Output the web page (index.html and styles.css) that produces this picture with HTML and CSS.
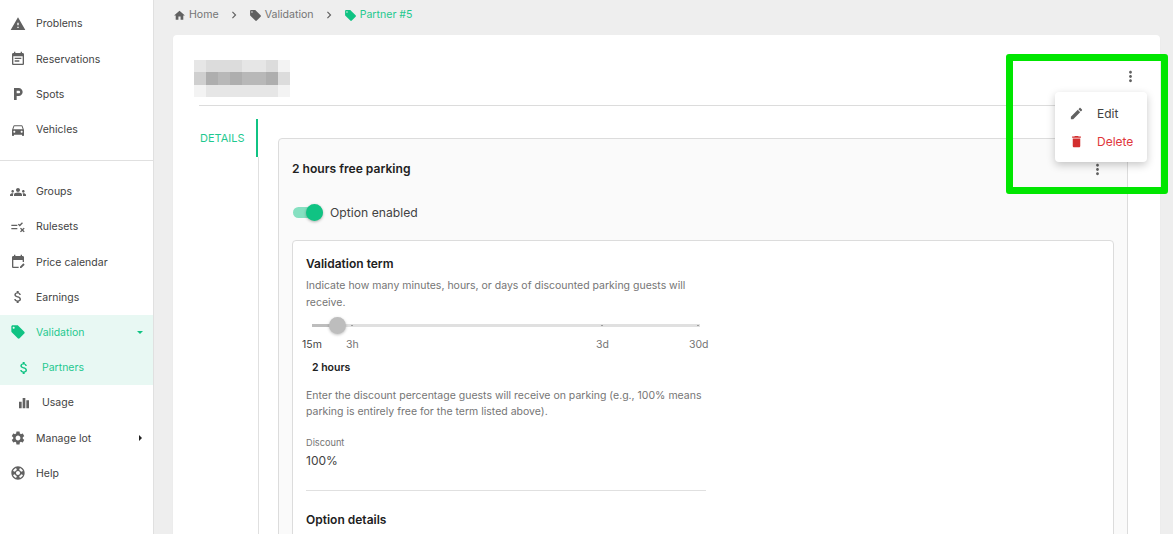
FILE: index.html
```html
<!DOCTYPE html>
<html lang="en">
<head>
<meta charset="utf-8">
<title>Partner #5</title>
<link rel="stylesheet" href="styles.css">
</head>
<body>
<div class="app">
  <aside class="sidebar">
    <nav class="nav-group">
      <a class="nav-item"><svg class="nav-icon" viewBox="0 0 24 24"><path d="M1 21h22L12 2 1 21zm12-3h-2v-2h2v2zm0-4h-2v-4h2v4z"/></svg><span>Problems</span></a>
      <a class="nav-item"><svg class="nav-icon" viewBox="0 0 24 24"><path d="M19 3h-1V1h-2v2H8V1H6v2H5c-1.1 0-2 .9-2 2v14c0 1.1.9 2 2 2h14c1.1 0 2-.9 2-2V5c0-1.1-.9-2-2-2zm0 16H5V8h14v11zM7 10h10v2H7zm0 4h7v2H7z"/></svg><span>Reservations</span></a>
      <a class="nav-item"><svg class="nav-icon" viewBox="0 0 24 24"><path d="M13 3H6v18h4v-6h3c3.31 0 6-2.69 6-6s-2.69-6-6-6zm.2 8H10V7h3.2c1.1 0 2 .9 2 2s-.9 2-2 2z"/></svg><span>Spots</span></a>
      <a class="nav-item"><svg class="nav-icon" viewBox="0 0 24 24"><path d="M18.92 6.01C18.72 5.42 18.16 5 17.5 5h-11c-.66 0-1.21.42-1.42 1.01L3 12v8c0 .55.45 1 1 1h1c.55 0 1-.45 1-1v-1h12v1c0 .55.45 1 1 1h1c.55 0 1-.45 1-1v-8l-2.08-5.99zM6.5 16c-.83 0-1.5-.67-1.5-1.5S5.67 13 6.5 13s1.5.67 1.5 1.5S7.33 16 6.5 16zm11 0c-.83 0-1.5-.67-1.5-1.5s.67-1.5 1.5-1.5 1.5.67 1.5 1.5-.67 1.5-1.5 1.5zM5 11l1.5-4.500h11L19 11H5z"/></svg><span>Vehicles</span></a>
    </nav>
    <hr class="nav-divider">
    <nav class="nav-group">
      <a class="nav-item"><svg class="nav-icon" viewBox="0 0 24 24"><path d="M4 13c1.1 0 2-.9 2-2s-.9-2-2-2-2 .9-2 2 .9 2 2 2zm1.13 1.1C4.76 14.04 4.39 14 4 14c-.99 0-1.93.21-2.78.58C.48 14.9 0 15.62 0 16.43V18h4.5v-1.61c0-.83.23-1.61.63-2.29zM20 13c1.1 0 2-.9 2-2s-.9-2-2-2-2 .9-2 2 .9 2 2 2zm4 3.43c0-.81-.48-1.53-1.22-1.85C21.93 14.21 20.99 14 20 14c-.39 0-.76.04-1.13.1.4.68.63 1.46.63 2.29V18H24v-1.57zM16.24 13.65c-1.17-.52-2.61-.9-4.24-.9s-3.07.39-4.24.9C6.68 14.13 6 15.21 6 16.39V18h12v-1.61c0-1.18-.68-2.26-1.76-2.74zM12 12c1.66 0 3-1.34 3-3s-1.34-3-3-3-3 1.34-3 3 1.34 3 3 3z"/></svg><span>Groups</span></a>
      <a class="nav-item"><svg class="nav-icon" viewBox="0 0 24 24"><path d="M2 8.500h9v2H2zm0 5h9v2H2zm12.600-5.100L18 5l1.400 1.400-4.800 4.800-2.800-2.800 1.400-1.400zm7.400 6L20.600 13l-2.100 2.100-2.100-2.100-1.400 1.400 2.100 2.100-2.100 2.100 1.400 1.400 2.100-2.100 2.100 2.100 1.400-1.400-2.100-2.100z"/></svg><span>Rulesets</span></a>
      <a class="nav-item"><svg class="nav-icon" viewBox="0 0 24 24"><path d="M19 3h-1V1h-2v2H8V1H6v2H5c-1.100 0-2 .9-2 2v14c0 1.100.9 2 2 2h8v-2H5V9h14v3h2V5c0-1.100-.9-2-2-2zM15 21h2l5-5-2-2-5 5z"/></svg><span>Price calendar</span></a>
      <a class="nav-item"><svg class="nav-icon" viewBox="0 0 24 24"><path d="M11.800 10.900c-2.270-.59-3-1.200-3-2.150 0-1.090 1.010-1.850 2.700-1.850 1.780 0 2.440.85 2.500 2.100h2.210c-.07-1.720-1.120-3.300-3.210-3.810V3h-3v2.160c-1.940.42-3.500 1.680-3.500 3.610 0 2.310 1.910 3.460 4.700 4.130 2.500.6 3 1.480 3 2.410 0 .69-.49 1.790-2.700 1.790-2.060 0-2.870-.92-2.980-2.100h-2.200c.12 2.190 1.760 3.420 3.680 3.830V21h3v-2.150c1.950-.37 3.500-1.500 3.500-3.550 0-2.840-2.430-3.810-4.700-4.400z"/></svg><span>Earnings</span></a>
      <div class="nav-active-block">
        <a class="nav-item nav-item-active"><svg class="nav-icon" viewBox="0 0 24 24"><path d="M21.410 11.580l-9-9C12.050 2.220 11.550 2 11 2H4c-1.100 0-2 .9-2 2v7c0 .55.22 1.050.59 1.420l9 9c.36.36.86.58 1.410.58s1.050-.22 1.410-.59l7-7c.37-.36.59-.86.59-1.410s-.23-1.060-.59-1.420zM5.500 7C4.670 7 4 6.330 4 5.500S4.670 4 5.500 4 7 4.670 7 5.500 6.330 7 5.500 7z"/></svg><span>Validation</span><i class="caret caret-down"></i></a>
        <a class="nav-item nav-sub nav-item-active"><svg class="nav-icon" viewBox="0 0 24 24"><path d="M11.800 10.900c-2.270-.59-3-1.200-3-2.150 0-1.090 1.010-1.850 2.700-1.850 1.780 0 2.440.85 2.500 2.100h2.210c-.07-1.720-1.120-3.300-3.210-3.810V3h-3v2.160c-1.940.42-3.500 1.680-3.500 3.610 0 2.310 1.910 3.460 4.700 4.130 2.500.6 3 1.480 3 2.410 0 .69-.49 1.790-2.700 1.790-2.060 0-2.870-.92-2.980-2.100h-2.200c.12 2.190 1.760 3.420 3.680 3.830V21h3v-2.150c1.950-.37 3.500-1.500 3.500-3.550 0-2.840-2.430-3.810-4.700-4.400z"/></svg><span>Partners</span></a>
      </div>
      <a class="nav-item nav-sub"><svg class="nav-icon" viewBox="0 0 24 24"><path d="M4.500 10h4v10h-4zM10 4.500h4V20h-4zM15.500 8h4v12h-4z"/></svg><span>Usage</span></a>
      <a class="nav-item"><svg class="nav-icon" viewBox="0 0 24 24"><path d="M19.140 12.940c.04-.3.060-.61.060-.94 0-.32-.02-.64-.07-.94l2.030-1.580c.18-.14.230-.41.120-.61l-1.920-3.320c-.12-.22-.37-.29-.59-.22l-2.390.96c-.5-.38-1.030-.7-1.620-.94l-.36-2.540c-.04-.24-.24-.41-.48-.41h-3.840c-.24 0-.43.17-.47.41l-.36 2.540c-.59.24-1.130.57-1.620.94l-2.390-.96c-.22-.08-.47 0-.59.22L2.740 8.870c-.12.210-.08.47.12.610l2.030 1.580c-.05.3-.09.630-.09.940s.02.640.07.940l-2.030 1.580c-.18.140-.23.410-.12.610l1.920 3.320c.12.220.37.290.59.220l2.390-.96c.5.380 1.030.7 1.620.94l.36 2.540c.05.240.24.410.48.410h3.840c.24 0 .44-.17.47-.41l.36-2.540c.59-.24 1.130-.56 1.620-.94l2.390.96c.22.080.47 0 .59-.22l1.920-3.320c.12-.22.07-.47-.12-.61l-2.010-1.580zM12 15.600c-1.980 0-3.600-1.620-3.600-3.600s1.620-3.600 3.600-3.600 3.600 1.620 3.600 3.600-1.620 3.600-3.600 3.600z"/></svg><span>Manage lot</span><i class="caret caret-right"></i></a>
      <a class="nav-item"><svg class="nav-icon" viewBox="0 0 24 24"><path d="M12 2C6.480 2 2 6.480 2 12s4.480 10 10 10 10-4.480 10-10S17.520 2 12 2zm7.460 7.120l-2.780 1.150c-.51-1.360-1.580-2.440-2.950-2.940l1.150-2.780c2.100.8 3.770 2.470 4.580 4.570zM12 15c-1.660 0-3-1.340-3-3s1.340-3 3-3 3 1.340 3 3-1.340 3-3 3zM9.130 4.540l1.170 2.780c-1.380.5-2.470 1.590-2.980 2.970L4.540 9.130c.81-2.110 2.480-3.780 4.590-4.590zM4.540 14.870l2.780-1.150c.51 1.380 1.590 2.460 2.970 2.960l-1.170 2.780c-2.100-.81-3.770-2.480-4.580-4.590zm10.340 4.590l-1.150-2.780c1.370-.51 2.450-1.590 2.950-2.970l2.780 1.170c-.81 2.100-2.480 3.770-4.580 4.580z"/></svg><span>Help</span></a>
    </nav>
  </aside>

  <main class="main">
    <div class="crumbs">
      <span class="crumb"><svg class="crumb-icon" viewBox="0 0 24 24"><path d="M10 20v-6h4v6h5v-8h3L12 3 2 12h3v8z"/></svg>Home</span>
      <svg class="crumb-sep" viewBox="0 0 24 24"><path d="M8.590 16.590 13.170 12 8.590 7.410 10 6l6 6-6 6z"/></svg>
      <span class="crumb"><svg class="crumb-icon" viewBox="0 0 24 24"><path d="M21.410 11.580l-9-9C12.050 2.220 11.550 2 11 2H4c-1.100 0-2 .9-2 2v7c0 .55.22 1.050.59 1.420l9 9c.36.36.86.58 1.410.58s1.050-.22 1.410-.59l7-7c.37-.36.59-.86.59-1.410s-.23-1.060-.59-1.420zM5.500 7C4.670 7 4 6.330 4 5.500S4.670 4 5.500 4 7 4.670 7 5.500 6.330 7 5.500 7z"/></svg>Validation</span>
      <svg class="crumb-sep" viewBox="0 0 24 24"><path d="M8.590 16.590 13.170 12 8.590 7.410 10 6l6 6-6 6z"/></svg>
      <span class="crumb crumb-current"><svg class="crumb-icon" viewBox="0 0 24 24"><path d="M21.410 11.580l-9-9C12.050 2.220 11.550 2 11 2H4c-1.100 0-2 .9-2 2v7c0 .55.22 1.050.59 1.420l9 9c.36.36.86.58 1.410.58s1.050-.22 1.410-.59l7-7c.37-.36.59-.86.59-1.410s-.23-1.060-.59-1.420zM5.500 7C4.670 7 4 6.330 4 5.500S4.670 4 5.500 4 7 4.670 7 5.500 6.330 7 5.500 7z"/></svg>Partner #5</span>
    </div>

    <section class="card">
      <header class="card-head">
        <div class="redacted" aria-hidden="true">
          <i class="s2"></i><i class="s3"></i><i class="s3"></i><i class="s3"></i><i class="s2"></i><i class="s2"></i><i class="s3"></i><i class="s1"></i>
          <i class="s4"></i><i class="s6"></i><i class="s5"></i><i class="s6"></i><i class="s5"></i><i class="s5"></i><i class="s6"></i><i class="s3"></i>
          <i class="s1"></i><i class="s2"></i><i class="s2"></i><i class="s2"></i><i class="s2"></i><i class="s2"></i><i class="s2"></i><i class="s1"></i>
        </div>
        <svg class="kebab kebab-top" viewBox="0 0 24 24"><path d="M12 8c1.100 0 2-.9 2-2s-.9-2-2-2-2 .9-2 2 .9 2 2 2zm0 2c-1.100 0-2 .9-2 2s.9 2 2 2 2-.9 2-2-.9-2-2-2zm0 6c-1.100 0-2 .9-2 2s.9 2 2 2 2-.9 2-2-.9-2-2-2z"/></svg>
      </header>
      <div class="card-body">
        <div class="tabs"><div class="tab">DETAILS</div><div class="tabs-rail"></div></div>
        <div class="panel">
          <div class="option">
            <div class="option-head">
              <h2 class="option-title">2 hours free parking</h2>
              <svg class="kebab" viewBox="0 0 24 24"><path d="M12 8c1.100 0 2-.9 2-2s-.9-2-2-2-2 .9-2 2 .9 2 2 2zm0 2c-1.100 0-2 .9-2 2s.9 2 2 2 2-.9 2-2-.9-2-2-2zm0 6c-1.100 0-2 .9-2 2s.9 2 2 2 2-.9 2-2-.9-2-2-2z"/></svg>
            </div>
            <label class="toggle-row"><span class="toggle"><span class="toggle-thumb"></span></span>Option enabled</label>
            <div class="inner">
              <div class="inner-col">
                <h3 class="section-title">Validation term</h3>
                <p class="help">Indicate how many minutes, hours, or days of discounted parking guests will receive.</p>
                <div class="slider">
                  <div class="track">
                    <span class="track-fill"></span><span class="thumb"></span>
                    <span class="tick tick-1"></span><span class="tick tick-2"></span><span class="tick tick-3"></span>
                  </div>
                  <div class="marks"><span class="mark-a">15m</span><span class="mark-b">3h</span><span class="mark-c">3d</span><span class="mark-d">30d</span></div>
                </div>
                <div class="term-value">2 hours</div>
                <p class="help help-second">Enter the discount percentage guests will receive on parking (e.g., 100% means parking is entirely free for the term listed above).</p>
                <div class="field-label">Discount</div>
                <div class="field-value">100%</div>
                <hr class="section-divider">
                <h3 class="section-title">Option details</h3>
              </div>
            </div>
          </div>
        </div>
      </div>
    </section>
  </main>
</div>

<div class="menu">
  <div class="menu-item"><svg class="menu-icon" viewBox="0 0 24 24"><path d="M3 17.250V21h3.750L17.810 9.940l-3.750-3.750L3 17.250zM20.710 7.040c.39-.39.39-1.020 0-1.410l-2.340-2.340c-.39-.39-1.020-.39-1.410 0l-1.830 1.830 3.750 3.750 1.830-1.830z"/></svg>Edit</div>
  <div class="menu-item menu-danger"><svg class="menu-icon" viewBox="0 0 24 24"><path d="M6 19c0 1.100.9 2 2 2h8c1.100 0 2-.9 2-2V7H6v12zM19 4h-3.500l-1-1h-5l-1 1H5v2h14V4z"/></svg>Delete</div>
</div>
<div class="highlight"></div>
</body>
</html>
```
FILE: styles.css
```css
* { box-sizing: border-box; }
html, body { margin: 0; height: 100%; }
body {
  width: 1173px;
  height: 534px;
  overflow: hidden;
  position: relative;
  background: #eeeeee;
  font-family: "Inter", "Noto Sans", sans-serif;
  color: #212121;
}
.app { display: flex; height: 534px; overflow: hidden; }

.sidebar {
  flex: 0 0 154px;
  background: #fff;
  border-right: 1px solid #e0e0e0;
  padding-top: 6.4px;
}
.nav-group { display: flex; flex-direction: column; }
.nav-item {
  height: 35.2px;
  display: flex;
  align-items: center;
  padding-left: 10px;
  padding-right: 10px;
  font-size: 10.5px;
  color: #424242;
}
.nav-icon { width: 16px; height: 16px; margin-right: 10px; fill: #616161; flex: none; }
.nav-sub { padding-left: 16px; }
.nav-divider { border: 0; border-top: 1px solid #e0e0e0; margin: 13px 0; }
.nav-active-block { background: #e8f8f3; }
.nav-item-active { color: #1fc98f; }
.nav-item-active .nav-icon { fill: #10c383; }
.caret { margin-left: auto; width: 0; height: 0; display: block; }
.caret-down { border-left: 3px solid transparent; border-right: 3px solid transparent; border-top: 3px solid #10c383; }
.caret-right { border-top: 3px solid transparent; border-bottom: 3px solid transparent; border-left: 3px solid #212121; margin-right: 1px; }

.main { flex: 1; min-width: 0; padding: 0 13px 0 19px; }
.crumbs { height: 35px; padding-top: 7px; display: flex; align-items: flex-start; font-size: 10.6px; line-height: 16px; color: #757575; }
.crumb { display: flex; align-items: center; }
.crumb-icon { width: 13px; height: 13px; margin-right: 3px; fill: #616161; }
.crumb-sep { width: 14px; height: 14px; margin: 1px 8px 0 8px; fill: #616161; }
.crumb-current { color: #1fc98f; }
.crumb-current .crumb-icon { fill: #10c383; }

.card { background: #fff; border-radius: 4px; height: 520px; padding: 25px 19px 0 21px; box-shadow: 0 1px 2px rgba(0,0,0,.04); }
.card-head { height: 46px; position: relative; margin-left: 5px; margin-right: -1px; border-bottom: 1px solid #dcdcdc; }
.redacted {
  display: grid;
  grid-template-columns: repeat(8, 12px);
  grid-template-rows: 12.33px 12.33px 12.33px;
  width: 96px;
  margin-left: -5px;
}
.redacted i { display: block; }
.s1 { background: #f3f3f3; }
.s2 { background: #e6e6e6; }
.s3 { background: #dcdcdc; }
.s4 { background: #cfcfcf; }
.s5 { background: #b8b8b8; }
.s6 { background: #aeaeae; }
.kebab { width: 17px; height: 17px; fill: #616161; flex: none; }
.kebab-top { position: absolute; right: 3px; top: 8px; }

.card-body { display: flex; }
.tabs { flex: 0 0 65px; display: flex; flex-direction: column; height: 430px; padding-top: 13px; }
.tab {
  height: 38px;
  margin-right: 1px;
  border-right: 2px solid #10c383;
  padding-left: 6px;
  line-height: 38px;
  font-size: 11px;
  color: #1fc98f;
}
.tabs-rail { flex: 1; border-right: 1px solid #e0e0e0; }
.panel { flex: 1; padding: 32px 13px 0 19px; }
.option { background: #fafafa; border: 1px solid #dcdcdc; border-radius: 4px; padding: 0 13px; height: 500px; }
.option-head { height: 59px; display: flex; align-items: center; justify-content: space-between; }
.option-title { margin: 0; font-size: 12.1px; font-weight: 600; color: #212121; }
.option-head .kebab { margin-right: 8px; margin-top: 1px; }
.toggle-row { display: flex; align-items: center; height: 28px; font-size: 12.2px; color: #424242; }
.toggle { position: relative; width: 30px; height: 11px; border-radius: 6px; background: #86e0c1; margin: 0 7px 0 1px; display: block; }
.toggle-thumb { position: absolute; right: 0; top: -3px; width: 17px; height: 17px; border-radius: 50%; background: #10c383; box-shadow: 0 1px 3px rgba(0,0,0,.3); }

.inner { background: #fff; border: 1px solid #dcdcdc; border-radius: 4px; margin-top: 14px; padding: 15px 13px 0; height: 340px; }
.inner-col { width: 400px; }
.section-title { margin: 0; font-size: 12px; line-height: 16px; font-weight: 600; color: #212121; }
.help { margin: 5px 0 0; font-size: 10.5px; line-height: 17px; color: #757575; }
.slider { margin: 0 -4px 0; padding-top: 8px; }
.track { position: relative; height: 3px; margin: 5px 10px 0 10px; background: #e0e0e0; }
.track-fill { position: absolute; left: 0; top: 0; width: 26px; height: 3px; background: #bdbdbd; }
.thumb { position: absolute; left: 17px; top: -7px; width: 17px; height: 17px; border-radius: 50%; background: #bdbdbd; box-shadow: 0 1px 3px rgba(0,0,0,.25); }
.tick { position: absolute; top: 1px; width: 2px; height: 1px; background: #9e9e9e; }
.tick-1 { left: 39px; }
.tick-2 { left: 289px; }
.tick-3 { left: 385px; }
.marks { position: relative; height: 16px; margin-top: 10px; font-size: 10.5px; line-height: 16px; color: #757575; }
.marks span { position: absolute; top: 0; }
.mark-a { left: 0; color: #424242; }
.mark-b { left: 44px; }
.mark-c { left: 294px; }
.mark-d { left: 387px; }
.term-value { margin: 7px 0 0 6px; font-size: 10.5px; line-height: 16px; font-weight: 600; color: #212121; }
.help-second { margin-top: 12px; line-height: 16px; }
.field-label { margin-top: 17px; font-size: 9.2px; line-height: 12px; color: #757575; }
.field-value { margin-top: 4px; font-size: 12px; line-height: 16px; color: #424242; }
.section-divider { border: 0; border-top: 1px solid #e0e0e0; margin: 21px 0 21px; }

.menu {
  position: absolute;
  left: 1055px;
  top: 92px;
  width: 92px;
  height: 70px;
  padding-top: 7px;
  background: #fff;
  border-radius: 4px;
  box-shadow: 0 3px 8px rgba(0,0,0,.22);
}
.menu-item { display: flex; align-items: center; height: 28px; padding-left: 14px; font-size: 12px; color: #424242; }
.menu-icon { width: 15px; height: 15px; margin-right: 13px; fill: #616161; }
.menu-danger { color: #e0363b; }
.menu-danger .menu-icon { fill: #d32f2f; }
.highlight {
  position: absolute;
  left: 1006px;
  top: 54px;
  width: 162px;
  height: 140px;
  border: 7px solid #00e600;
  border-radius: 3px;
  pointer-events: none;
}
```
